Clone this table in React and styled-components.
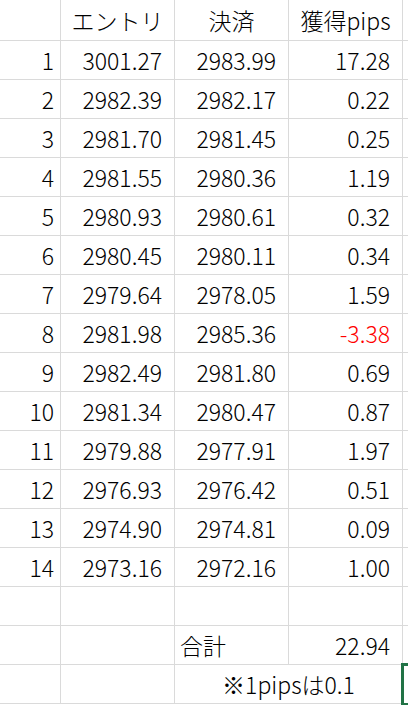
import React from 'react';
import styled, { createGlobalStyle } from 'styled-components';

const GlobalStyle = createGlobalStyle`
  html, body {
    margin: 0;
    padding: 0;
    background: #ffffff;
    overflow: hidden;
  }
`;

const Sheet = styled.div`
  display: grid;
  grid-template-columns: 61px 114px 114px 114px 1fr;
  grid-template-rows: 41px;
  grid-auto-rows: 39px;
  width: 408px;
  height: 705px;
  font-family: "Noto Sans CJK JP", "Noto Sans", sans-serif;
  font-size: 23px;
  font-weight: 300;
  color: #000;
  background: #fff;
`;

const Cell = styled.div`
  display: flex;
  align-items: center;
  justify-content: ${p => p.align === 'right' ? 'flex-end' : p.align === 'left' ? 'flex-start' : 'center'};
  padding: ${p => p.pad || '0 12px 0 0'};
  border-right: 1px solid #dadada;
  border-bottom: 1px solid #dadada;
  box-sizing: border-box;
  white-space: nowrap;
  color: ${p => p.negative ? '#ff0000' : '#000'};
  grid-column: ${p => p.span ? `span ${p.span}` : 'auto'};
`;

const Selected = styled(Cell)`
  outline: 3px solid #217346;
  outline-offset: -1px;
  position: relative;
  z-index: 1;
`;

const trades = [
  ['3001.27', '2983.99', '17.28'],
  ['2982.39', '2982.17', '0.22'],
  ['2981.70', '2981.45', '0.25'],
  ['2981.55', '2980.36', '1.19'],
  ['2980.93', '2980.61', '0.32'],
  ['2980.45', '2980.11', '0.34'],
  ['2979.64', '2978.05', '1.59'],
  ['2981.98', '2985.36', '-3.38'],
  ['2982.49', '2981.80', '0.69'],
  ['2981.34', '2980.47', '0.87'],
  ['2979.88', '2977.91', '1.97'],
  ['2976.93', '2976.42', '0.51'],
  ['2974.90', '2974.81', '0.09'],
  ['2973.16', '2972.16', '1.00'],
];

const App = () => {
  return (
    <>
      <GlobalStyle />
      <Sheet>
        {/* header */}
        <Cell />
        <Cell align="center" pad="0">エントリ</Cell>
        <Cell align="center" pad="0">決済</Cell>
        <Cell align="center" pad="0">獲得pips</Cell>
        <Cell />

        {trades.map((t, i) => (
          <React.Fragment key={i}>
            <Cell align="right" pad="0 6px 0 0">{i + 1}</Cell>
            <Cell align="right">{t[0]}</Cell>
            <Cell align="right">{t[1]}</Cell>
            <Cell align="right" negative={t[2].startsWith('-')}>{t[2]}</Cell>
            <Cell />
          </React.Fragment>
        ))}

        {/* blank row */}
        <Cell /><Cell /><Cell /><Cell /><Cell />

        {/* total */}
        <Cell /><Cell />
        <Cell align="left" pad="0 0 0 5px">合計</Cell>
        <Cell align="right">22.94</Cell>
        <Cell />

        {/* note */}
        <Cell /><Cell />
        <Cell span={2} align="center" pad="0">※1pipsは0.1</Cell>
        <Selected />
      </Sheet>
    </>
  );
};

export default App;
